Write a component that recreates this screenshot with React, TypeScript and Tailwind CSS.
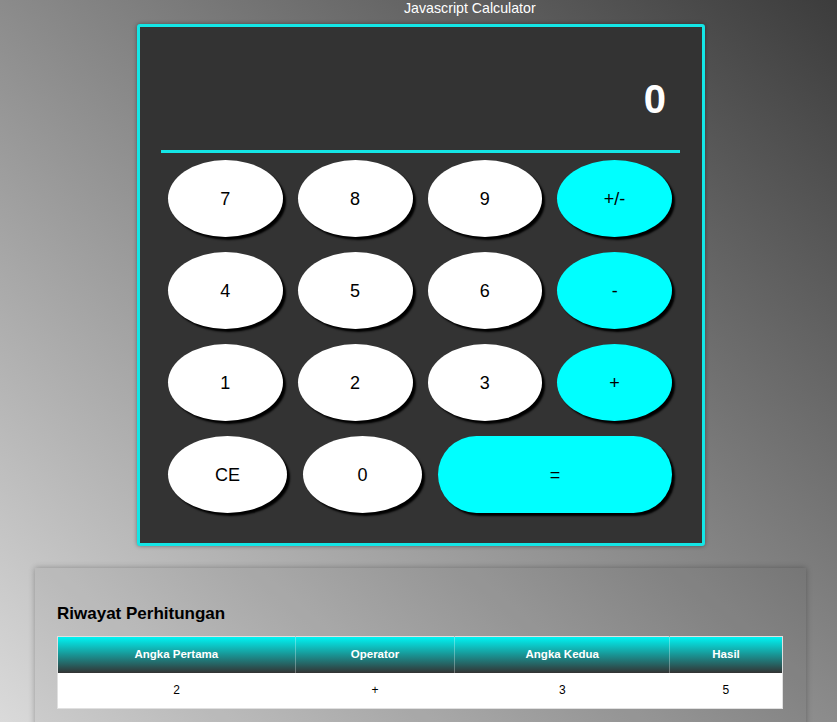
import clsx from "clsx";

const rows = [
  ["7", "8", "9", "+/-"],
  ["4", "5", "6", "-"],
  ["1", "2", "3", "+"],
];

const history = [{ first: "2", op: "+", second: "3", result: "5" }];

function Key({ label, accent, className }: { label: string; accent?: boolean; className?: string }) {
  return (
    <button
      className={clsx(
        "h-[77px] rounded-[50%] text-lg text-black shadow-[3px_3px_2px_#000]",
        accent ? "bg-[#00ffff]" : "bg-white",
        className
      )}
    >
      {label}
    </button>
  );
}

export default function App() {
  return (
    <div
      className={clsx(
        "h-[722px] overflow-hidden font-['Liberation_Sans',Arial,sans-serif]",
        "bg-[linear-gradient(to_top_right,#dadada,#3c3c3c)]"
      )}
    >
      <h1 className="ml-[404px] h-6 text-[14.2px] leading-[17px] text-white">Javascript Calculator</h1>

      {/* Calculator */}
      <div className="ml-[137px] w-[568px] rounded-[3px] border-[3px] border-[#14e6e6] bg-[#333] shadow-[0_0_4px_rgba(0,0,0,0.4)]">
        <div className="ml-[21px] mr-[22px] flex h-[126px] items-end justify-end border-b-[3px] border-[#14e6e6] pr-[14px] pb-[31px]">
          <span className="text-[40px] leading-[40px] font-bold text-white">0</span>
        </div>
        <div className="pl-[28px] pr-[30px] pt-[7px] pb-[30px]">
          <div className="flex flex-col gap-[15px]">
            {rows.map((row, i) => (
              <div key={i} className="grid grid-cols-4 gap-[15px]">
                {row.map((k, j) => (
                  <Key key={k} label={k} accent={j === 3} />
                ))}
              </div>
            ))}
            <div className="flex gap-[16px]">
              <Key label="CE" className="w-[119px]" />
              <Key label="0" className="w-[119px]" />
              <Key label="=" accent className="flex-1 rounded-full" />
            </div>
          </div>
        </div>
      </div>

      {/* Riwayat */}
      <div className="mt-[22px] ml-[35px] w-[771px] bg-black/5 px-[22px] pt-[36px] pb-6 shadow-[0_0_6px_rgba(0,0,0,0.3)]">
        <h3 className="mb-[12px] text-[17px] leading-5 font-bold text-black">Riwayat Perhitungan</h3>
        <table className="w-[726px] border-collapse border border-[#e0e0e0] text-center text-[12px]">
          <thead>
            <tr className="h-[36px] bg-[linear-gradient(to_bottom,#00f3f3,#333)] text-[11.5px] text-white">
              <th className="w-[238px] border-r border-white/30 font-bold">Angka Pertama</th>
              <th className="w-[160px] border-r border-white/30 font-bold">Operator</th>
              <th className="w-[215px] border-r border-white/30 font-bold">Angka Kedua</th>
              <th className="w-[113px] font-bold">Hasil</th>
            </tr>
          </thead>
          <tbody>
            {history.map((h, i) => (
              <tr key={i} className="h-[36px] bg-white text-black">
                <td>{h.first}</td>
                <td>{h.op}</td>
                <td>{h.second}</td>
                <td>{h.result}</td>
              </tr>
            ))}
          </tbody>
        </table>
      </div>
    </div>
  );
}
